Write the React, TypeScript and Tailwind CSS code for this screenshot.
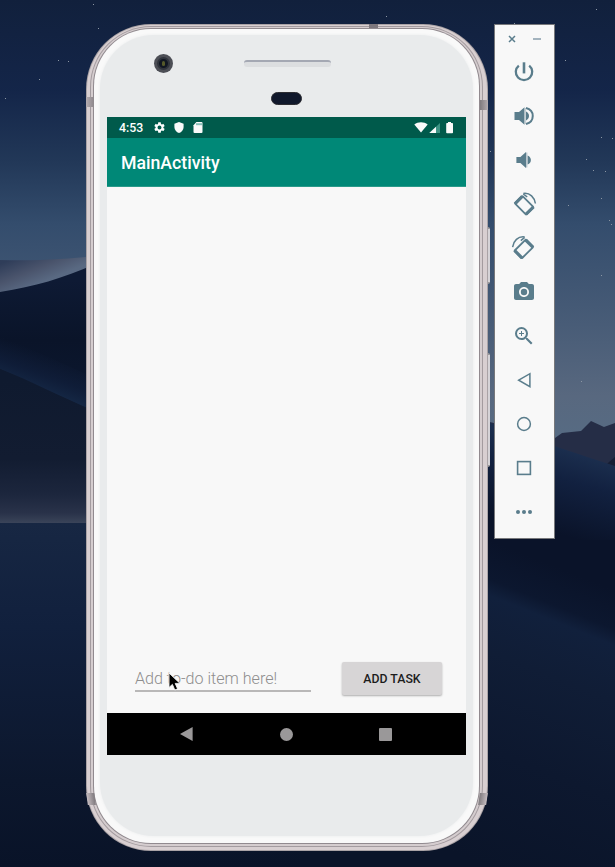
import type { ReactNode } from "react";
import { MdCameraAlt, MdSettings, MdZoomIn } from "react-icons/md";

const stars: [number, number][] = [
  [514, 23], [565, 60], [601, 137], [612, 138], [586, 159], [593, 170], [605, 171], [601, 198],
  [568, 205], [609, 220], [611, 224], [601, 275], [581, 381], [98, 28], [58, 60], [68, 61], [93, 4],
  [39, 79], [386, 16], [596, 9], [5, 98], [490, 151], [61, 862],
];

function Wallpaper() {
  return (
    <svg className="absolute inset-0" width="615" height="867" viewBox="0 0 615 867" aria-hidden="true">
      <defs>
        <linearGradient id="sky" x1="0" y1="0" x2="0" y2="450" gradientUnits="userSpaceOnUse">
          <stop offset="0" stopColor="#11203c" />
          <stop offset="0.2" stopColor="#14264a" stopOpacity="0.96" />
          <stop offset="0.36" stopColor="#223858" />
          <stop offset="0.5" stopColor="#344d6d" />
          <stop offset="0.72" stopColor="#485c77" />
          <stop offset="0.88" stopColor="#58687f" />
          <stop offset="1" stopColor="#566c84" />
        </linearGradient>
        <linearGradient id="crest" x1="10" y1="260" x2="22" y2="290" gradientUnits="userSpaceOnUse">
          <stop offset="0" stopColor="#2f3d59" />
          <stop offset="0.55" stopColor="#4a546c" />
          <stop offset="1" stopColor="#596982" />
        </linearGradient>
        <linearGradient id="duneA" x1="0" y1="280" x2="0" y2="400" gradientUnits="userSpaceOnUse">
          <stop offset="0" stopColor="#0e1a34" />
          <stop offset="0.5" stopColor="#0a1429" />
          <stop offset="1" stopColor="#0c1830" />
        </linearGradient>
        <linearGradient id="duneGlow" x1="50" y1="355" x2="38" y2="388" gradientUnits="userSpaceOnUse">
          <stop offset="0" stopColor="#101d38" stopOpacity="0" />
          <stop offset="0.6" stopColor="#101e3a" stopOpacity="0.8" />
          <stop offset="1" stopColor="#142643" />
        </linearGradient>
        <linearGradient id="duneB" x1="0" y1="380" x2="0" y2="523" gradientUnits="userSpaceOnUse">
          <stop offset="0" stopColor="#0f1a2f" />
          <stop offset="0.55" stopColor="#121c31" />
          <stop offset="0.8" stopColor="#1c263d" />
          <stop offset="0.93" stopColor="#293249" />
          <stop offset="1" stopColor="#3a4459" />
        </linearGradient>
        <linearGradient id="ground" x1="0" y1="523" x2="0" y2="867" gradientUnits="userSpaceOnUse">
          <stop offset="0" stopColor="#172743" />
          <stop offset="0.3" stopColor="#11203d" />
          <stop offset="0.75" stopColor="#0c172d" />
          <stop offset="1" stopColor="#091328" />
        </linearGradient>
        <linearGradient id="duneR" x1="585" y1="455" x2="562" y2="535" gradientUnits="userSpaceOnUse">
          <stop offset="0" stopColor="#1b2e4e" />
          <stop offset="0.35" stopColor="#122140" />
          <stop offset="1" stopColor="#0a1329" />
        </linearGradient>
        <linearGradient id="groundR" x1="490" y1="540" x2="377" y2="822" gradientUnits="userSpaceOnUse">
          <stop offset="0" stopColor="#0a1329" />
          <stop offset="0.12" stopColor="#0c172f" />
          <stop offset="0.17" stopColor="#11203c" />
          <stop offset="0.34" stopColor="#101d36" />
          <stop offset="0.64" stopColor="#0d182f" />
          <stop offset="1" stopColor="#0a1429" />
        </linearGradient>
      </defs>
      <rect width="615" height="460" fill="url(#sky)" />
      {stars.map(([x, y]) => (
        <rect key={`${x}-${y}`} x={x} y={y} width="1" height="1" fill="#8b96a3" />
      ))}
      <path d="M0 260C40 261 65 259 95 256V300H0Z" fill="url(#crest)" />
      <path d="M0 292C35 286 62 279 95 264V420H0Z" fill="url(#duneA)" />
      <path d="M0 335L95 378V412L0 369Z" fill="url(#duneGlow)" />
      <path d="M0 369C30 380 60 397 95 411V523H0Z" fill="url(#duneB)" />
      <rect y="523" width="300" height="344" fill="url(#ground)" />
      <path d="M480 420L494 423L555 438L562 433L581 431L591 421L604 427L615 423V480H480Z" fill="#252d46" />
      <path d="M604 467L609 462L615 457V472Z" fill="#161e34" />
      <path d="M480 419C530 438 565 450 615 466V560H480Z" fill="url(#duneR)" />
      <rect x="300" y="540" width="315" height="327" fill="url(#groundR)" />
    </svg>
  );
}

function Tool({ children }: { children: ReactNode }) {
  return (
    <button type="button" className="flex h-[44px] w-full items-center justify-center pr-px text-[#5a7d8c]">
      {children}
    </button>
  );
}

function Glyph({ children }: { children: ReactNode }) {
  return (
    <svg className="size-[30px]" viewBox="-15 -15 30 30" fill="none" stroke="currentColor" strokeWidth="1.7">
      {children}
    </svg>
  );
}

function RotateGlyph() {
  return (
    <>
      <rect x="-8" y="-5.3" width="16" height="10.6" rx="0.8" transform="translate(0.2 1.3) rotate(45)" strokeWidth="1.8" />
      <path d="M-1.7 -7.6L-9.1 -0.2M9.5 2.8L2.1 10.2" strokeWidth="3.2" />
      <path d="M-0.7 -10.6C6 -11.6 10.6 -6.5 11.4 -0.5M-0.7 -10.2L3.2 -7" strokeWidth="1.5" />
    </>
  );
}

function EmulatorToolbar() {
  return (
    <aside className="flex h-[515px] w-[61px] flex-col border border-[#77787b] bg-[#f8f8f8]">
      <div className="flex h-[25px] items-center justify-between pt-[3px] pr-[13px] pl-[13px] text-[#5a7d8c]">
        <svg className="size-[8px]" viewBox="0 0 8 8" stroke="currentColor" strokeWidth="1.5">
          <path d="M1 1L7 7M7 1L1 7" />
        </svg>
        <span className="h-[2px] w-[8px] bg-[#a3b3be]" />
      </div>
      <Tool>
        <Glyph>
          <path d="M0 -9.7V1.4" strokeWidth="2.6" />
          <path d="M-5.2 -6.4A8.2 8.2 0 1 0 5.2 -6.4" strokeWidth="2.3" />
        </Glyph>
      </Tool>
      <Tool>
        <Glyph>
          <path d="M-9.5 -4H-5L0.5 -8.7V8.7L-5 4H-9.5Z" fill="currentColor" stroke="none" />
          <path d="M1.2 -8V8" stroke="#b7c5cc" strokeWidth="1.2" />
          <path d="M2 -4.4C6 -2.6 6 2.6 2 4.4Z" fill="currentColor" stroke="none" />
          <path d="M2 -8C11 -5.8 11 5.8 2 8" strokeWidth="2" />
        </Glyph>
      </Tool>
      <Tool>
        <Glyph>
          <path d="M-7.6 -3H-3.6L2 -8V8L-3.6 3H-7.6Z" fill="currentColor" stroke="none" />
          <path d="M2.7 -7.5V7.5" stroke="#b7c5cc" strokeWidth="1.3" />
          <path d="M3.6 -4.6C8 -2.8 8 2.8 3.6 4.6Z" fill="currentColor" stroke="none" />
        </Glyph>
      </Tool>
      <Tool><Glyph><RotateGlyph /></Glyph></Tool>
      <Tool><Glyph><g transform="translate(0 -0.4) scale(-1 1)"><RotateGlyph /></g></Glyph></Tool>
      <Tool><MdCameraAlt size={24} /></Tool>
      <Tool><MdZoomIn size={24} /></Tool>
      <Tool><Glyph><path d="M-5.3 0.2L5.9 -6.3V6.7Z" strokeWidth="1.5" /></Glyph></Tool>
      <Tool><Glyph><circle r="6.4" strokeWidth="1.5" /></Glyph></Tool>
      <Tool><Glyph><rect x="-6.4" y="-6.4" width="12.8" height="12.8" strokeWidth="1.6" /></Glyph></Tool>
      <Tool>
        <Glyph>
          <g fill="currentColor" stroke="none"><circle cx="-6" r="2" /><circle r="2" /><circle cx="6" r="2" /></g>
        </Glyph>
      </Tool>
    </aside>
  );
}

function StatusBar() {
  return (
    <div className="flex h-[21px] items-center bg-[#005a4b] pl-[12px] text-white">
      <span className="w-[34px] pt-[1px] text-[12.3px] leading-none font-medium">4:53</span>
      <MdSettings size={13} />
      <svg className="ml-[8px] h-[11px] w-[10px]" viewBox="0 0 10 11" fill="#fafafa">
        <path d="M5 0L9.6 1.8V5C9.6 8 7.6 10.2 5 11C2.4 10.2 0.4 8 0.4 5V1.8Z" />
      </svg>
      <svg className="ml-[9px] h-[11px] w-[10px]" viewBox="0 0 10 11">
        <path d="M3.4 0H8.5Q9.5 0 9.5 1V10Q9.5 11 8.5 11H1.5Q0.5 11 0.5 10V3.2Z" fill="#fafafa" />
        <path d="M4 1.2V3.2M6 1.2V3.2M8 1.2V3.2" stroke="#00796b" strokeWidth="0.9" />
      </svg>
      <svg className="mr-[12px] ml-auto h-[13px] w-[40px]" viewBox="0 0 40 13" fill="#fafafa">
        <path d="M0.3 3.6C4 0.5 10 0.5 13.7 3.6L7 11.6Z" />
        <path d="M26 2V12H15.3Z" fill="#3d9384" />
        <path d="M22 5.7V12H15.3Z" />
        <path d="M34 1H37V2H38.2Q39 2 39 2.8V11.4Q39 12.2 38.2 12.2H33Q32.2 12.2 32.2 11.4V2.8Q32.2 2 33 2H34Z" />
      </svg>
    </div>
  );
}

function Screen() {
  return (
    <div className="flex h-[638px] w-[359px] flex-col bg-[#f8f8f8]">
      <StatusBar />
      <header className="flex h-[49px] items-center border-b border-[#2a9a8a] bg-[#008877] pl-[14px]">
        <h1 className="pt-[3px] text-[17.7px] leading-none font-medium text-white">MainActivity</h1>
      </header>
      <main className="flex flex-1 items-end pr-[24px] pb-[18px] pl-[28px]">
        <div className="relative mb-[3px] h-[30px] w-[176px] border-b-2 border-[#b9b8b8]">
          <span className="block pt-[9px] text-[16.1px] leading-none font-light whitespace-nowrap text-[#8f8e8e]">
            Add to-do item here!
          </span>
          <svg className="absolute top-[10px] left-[33px] h-[20px] w-[14px]" viewBox="0 0 14 20">
            <path d="M1 1V15.5L4.4 12.4L6.8 18L9.6 16.8L7.2 11.4H12Z" fill="#000" stroke="#f8f8f8" strokeWidth="0.9" />
          </svg>
        </div>
        <button
          type="button"
          className="ml-auto h-[33px] w-[100px] rounded-[2px] bg-[#d7d5d6] pt-[1px] text-[12.3px] leading-none font-medium text-[#1c1c1c] shadow-[0_1px_2px_rgba(0,0,0,0.3)]"
        >
          ADD TASK
        </button>
      </main>
      <nav className="flex h-[42px] items-center justify-between bg-black pr-[74px] pl-[73px]">
        <svg className="size-[14px]" viewBox="0 0 14 14"><path d="M0 7L12.6 0V14Z" fill="#9a9899" /></svg>
        <span className="size-[13px] rounded-full bg-[#9a9899]" />
        <span className="size-[13px] rounded-[1px] bg-[#9a9899]" />
      </nav>
    </div>
  );
}

function Phone() {
  return (
    <div className="relative h-[827px] w-[402px]">
      <span className="absolute top-[203px] right-[-2px] h-[57px] w-[4px] rounded-r-[2px] border-y-2 border-[#99989b] bg-[#d5d3d7]" />
      <span className="absolute top-[329px] right-[-2px] h-[114px] w-[4px] rounded-r-[2px] border-y-2 border-[#99989b] bg-[#d5d3d7]" />
      <div className="relative h-full rounded-[65px] bg-[#aaa3a6] p-px">
        <div className="h-full rounded-[64px] bg-[#d8cfd1] pt-px pr-[4px] pb-[3px] pl-[3px]">
          <div className="h-full rounded-[61px] bg-[#a39b9f] p-px">
            <div className="h-full rounded-[60px] bg-[#d5cdcf] px-[2px] pt-px pb-[2px]">
              <div className="h-full rounded-[58px] bg-[#918a8f] p-px">
                <div className="h-full rounded-[57px] bg-[#f9f9f9] px-[6px] pt-[6px] pb-[7px]">
                  <div className="flex h-full flex-col items-center rounded-[54px] bg-[#e9ebec] shadow-[0_0_3px_#e9ebec]">
                    <div className="flex h-[82px] w-[359px] flex-col items-center">
                      <div className="flex w-full items-start pt-[19px] pl-[47px]">
                        <span className="flex size-[19px] items-center justify-center rounded-full bg-[#4c4e55]">
                          <span className="flex size-[13px] items-center justify-center rounded-full border-2 border-[#30343c] bg-[#111722]">
                            <span className="h-[5px] w-[3px] rounded-full bg-[#55592b]" />
                          </span>
                        </span>
                        <span className="mt-[6px] ml-[71px] h-[7px] w-[87px] rounded-[3px] border-t-2 border-[#a4a8b3] bg-[#dcdee0]" />
                      </div>
                      <span className="mt-[19px] h-[13px] w-[31px] rounded-full border border-[#2d2d32] bg-[#10182b]" />
                    </div>
                    <Screen />
                  </div>
                </div>
              </div>
            </div>
          </div>
        </div>
      </div>
      <span className="absolute top-0 left-[283px] h-[4px] w-[9px] bg-[#7d777d]" />
      <span className="absolute top-[73px] left-0 h-[10px] w-[8px] bg-gradient-to-r from-[#b4acb0] to-[#8e888c]" />
      <span className="absolute top-[76px] right-0 h-[10px] w-[8px] bg-gradient-to-l from-[#b4acb0] to-[#7f7a7e]" />
      <span className="absolute top-[769px] left-[1px] h-[12px] w-[8px] skew-x-[8deg] bg-gradient-to-r from-[#c5bcc0] to-[#7f7a7e]" />
      <span className="absolute top-[769px] right-[1px] h-[12px] w-[8px] -skew-x-[8deg] bg-gradient-to-l from-[#c5bcc0] to-[#7f7a7e]" />
    </div>
  );
}

export default function App() {
  return (
    <div className="relative h-[867px] w-[615px] overflow-hidden bg-[#0b152b] font-['Roboto',sans-serif]">
      <Wallpaper />
      <div className="relative flex items-start gap-[6px] pt-[24px] pl-[86px]">
        <Phone />
        <EmulatorToolbar />
      </div>
    </div>
  );
}
